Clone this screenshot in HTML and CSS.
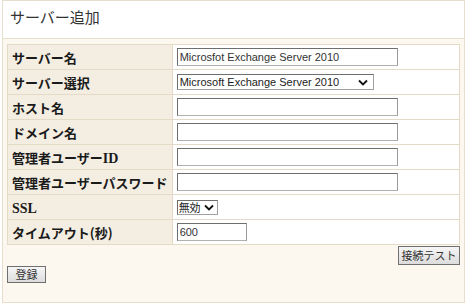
FILE: index.html
```html
<!DOCTYPE html>
<html lang="ja">
<head>
<meta charset="utf-8">
<title>サーバー追加</title>
<link rel="stylesheet" href="styles.css">
</head>
<body>
<div class="panel">
  <div class="panel-head">サーバー追加</div>
  <div class="panel-body">
    <table class="form">
      <tr><th>サーバー名</th><td><input class="txt" type="text" value="Microsfot Exchange Server 2010"></td></tr>
      <tr><th>サーバー選択</th><td><select class="sel"><option>Microsoft Exchange Server 2010</option></select></td></tr>
      <tr><th>ホスト名</th><td><input class="txt" type="text" value=""></td></tr>
      <tr><th>ドメイン名</th><td><input class="txt" type="text" value=""></td></tr>
      <tr><th>管理者ユーザー<span class="en">ID</span></th><td><input class="txt" type="text" value=""></td></tr>
      <tr><th>管理者ユーザーパスワード</th><td><input class="txt" type="password" value=""></td></tr>
      <tr><th><span class="en">SSL</span></th><td><select class="sel sel-small"><option>無効</option></select></td></tr>
      <tr><th>タイムアウト(秒)</th><td><input class="txt txt-short" type="text" value="600"></td></tr>
    </table>
    <div class="actions-right"><button class="btn btn-test" type="button">接続テスト</button></div>
    <div class="actions-left"><button class="btn btn-save" type="button">登録</button></div>
  </div>
</div>
</body>
</html>
```

FILE: styles.css
```css
html, body {
  margin: 0;
  padding: 0;
  background: #ffffff;
}

.panel {
  margin: 0 2px;
  border: 1px solid #e6dfd0;
  height: 303px;
  box-sizing: border-box;
  display: flex;
  flex-direction: column;
}

.panel-head {
  height: 37px;
  line-height: 32px;
  padding-left: 7px;
  background: #ffffff;
  border-bottom: 1px solid #e6dfd0;
  font-family: "Noto Sans CJK JP", sans-serif;
  font-size: 15px;
  color: #333333;
}

.panel-body {
  flex: 1;
  background: #fcf8f0;
  padding: 5px 5px 0 4px;
}

.form {
  width: 453px;
  border-collapse: collapse;
  border: 1px solid #e3dac8;
}

.form th,
.form td {
  border: 1px solid #e3dac8;
  height: 24px;
  padding: 0 4px;
}

.form th {
  width: 154px;
  text-align: left;
  background: #f4eee2;
  font-family: "Noto Sans CJK JP", sans-serif;
  font-weight: bold;
  font-size: 13px;
  color: #1a1a1a;
  white-space: nowrap;
}

.form th .en {
  font-family: "Liberation Serif", serif;
  font-weight: bold;
  font-size: 14px;
}

.form td {
  background: #ffffff;
}

.txt {
  box-sizing: border-box;
  width: 221px;
  height: 18px;
  margin: 0;
  padding: 0 2px;
  border: 1px solid #6e6e6e;
  border-bottom-color: #b0b0b0;
  border-right-color: #9a9a9a;
  font-family: "Liberation Sans", Arial, sans-serif;
  font-size: 11px;
  color: #333333;
  background: #ffffff;
  display: block;
}

.txt-short {
  width: 70px;
}

.sel {
  -webkit-appearance: none;
  appearance: none;
  box-sizing: border-box;
  width: 197px;
  height: 16px;
  margin: 0;
  padding: 0 0 0 2px;
  border: 1px solid #6e6e6e;
  border-bottom-color: #a0a0a0;
  border-right-color: #a0a0a0;
  border-radius: 0;
  font-family: "Liberation Sans", "Noto Sans CJK JP", Arial, sans-serif;
  font-size: 11px;
  line-height: 14px;
  color: #222222;
  background: #ffffff url("data:image/svg+xml,%3Csvg xmlns='http://www.w3.org/2000/svg' width='10' height='7' viewBox='0 0 10 7'%3E%3Cpath d='M1 1.5 L5 5.5 L9 1.5' fill='none' stroke='%23111' stroke-width='1.8'/%3E%3C/svg%3E") no-repeat right 5px center;
  display: block;
}

.sel-small {
  width: 41px;
  height: 15px;
  padding-left: 1px;
  background-position: right 3px center;
}

.actions-right {
  display: flex;
  justify-content: flex-end;
  padding-top: 1px;
  margin-right: -1px;
}

.actions-left {
  display: flex;
  padding-top: 1px;
}

.btn {
  box-sizing: border-box;
  margin: 0;
  padding: 0;
  border: 1px solid #707070;
  border-radius: 0;
  background: linear-gradient(#f6f6f6, #dcdcdc);
  font-family: "Noto Sans CJK JP", sans-serif;
  font-size: 11px;
  line-height: 1;
  color: #333333;
  white-space: nowrap;
}

.btn-test {
  width: 62px;
  height: 19px;
}

.btn-save {
  width: 39px;
  height: 17px;
}
```
